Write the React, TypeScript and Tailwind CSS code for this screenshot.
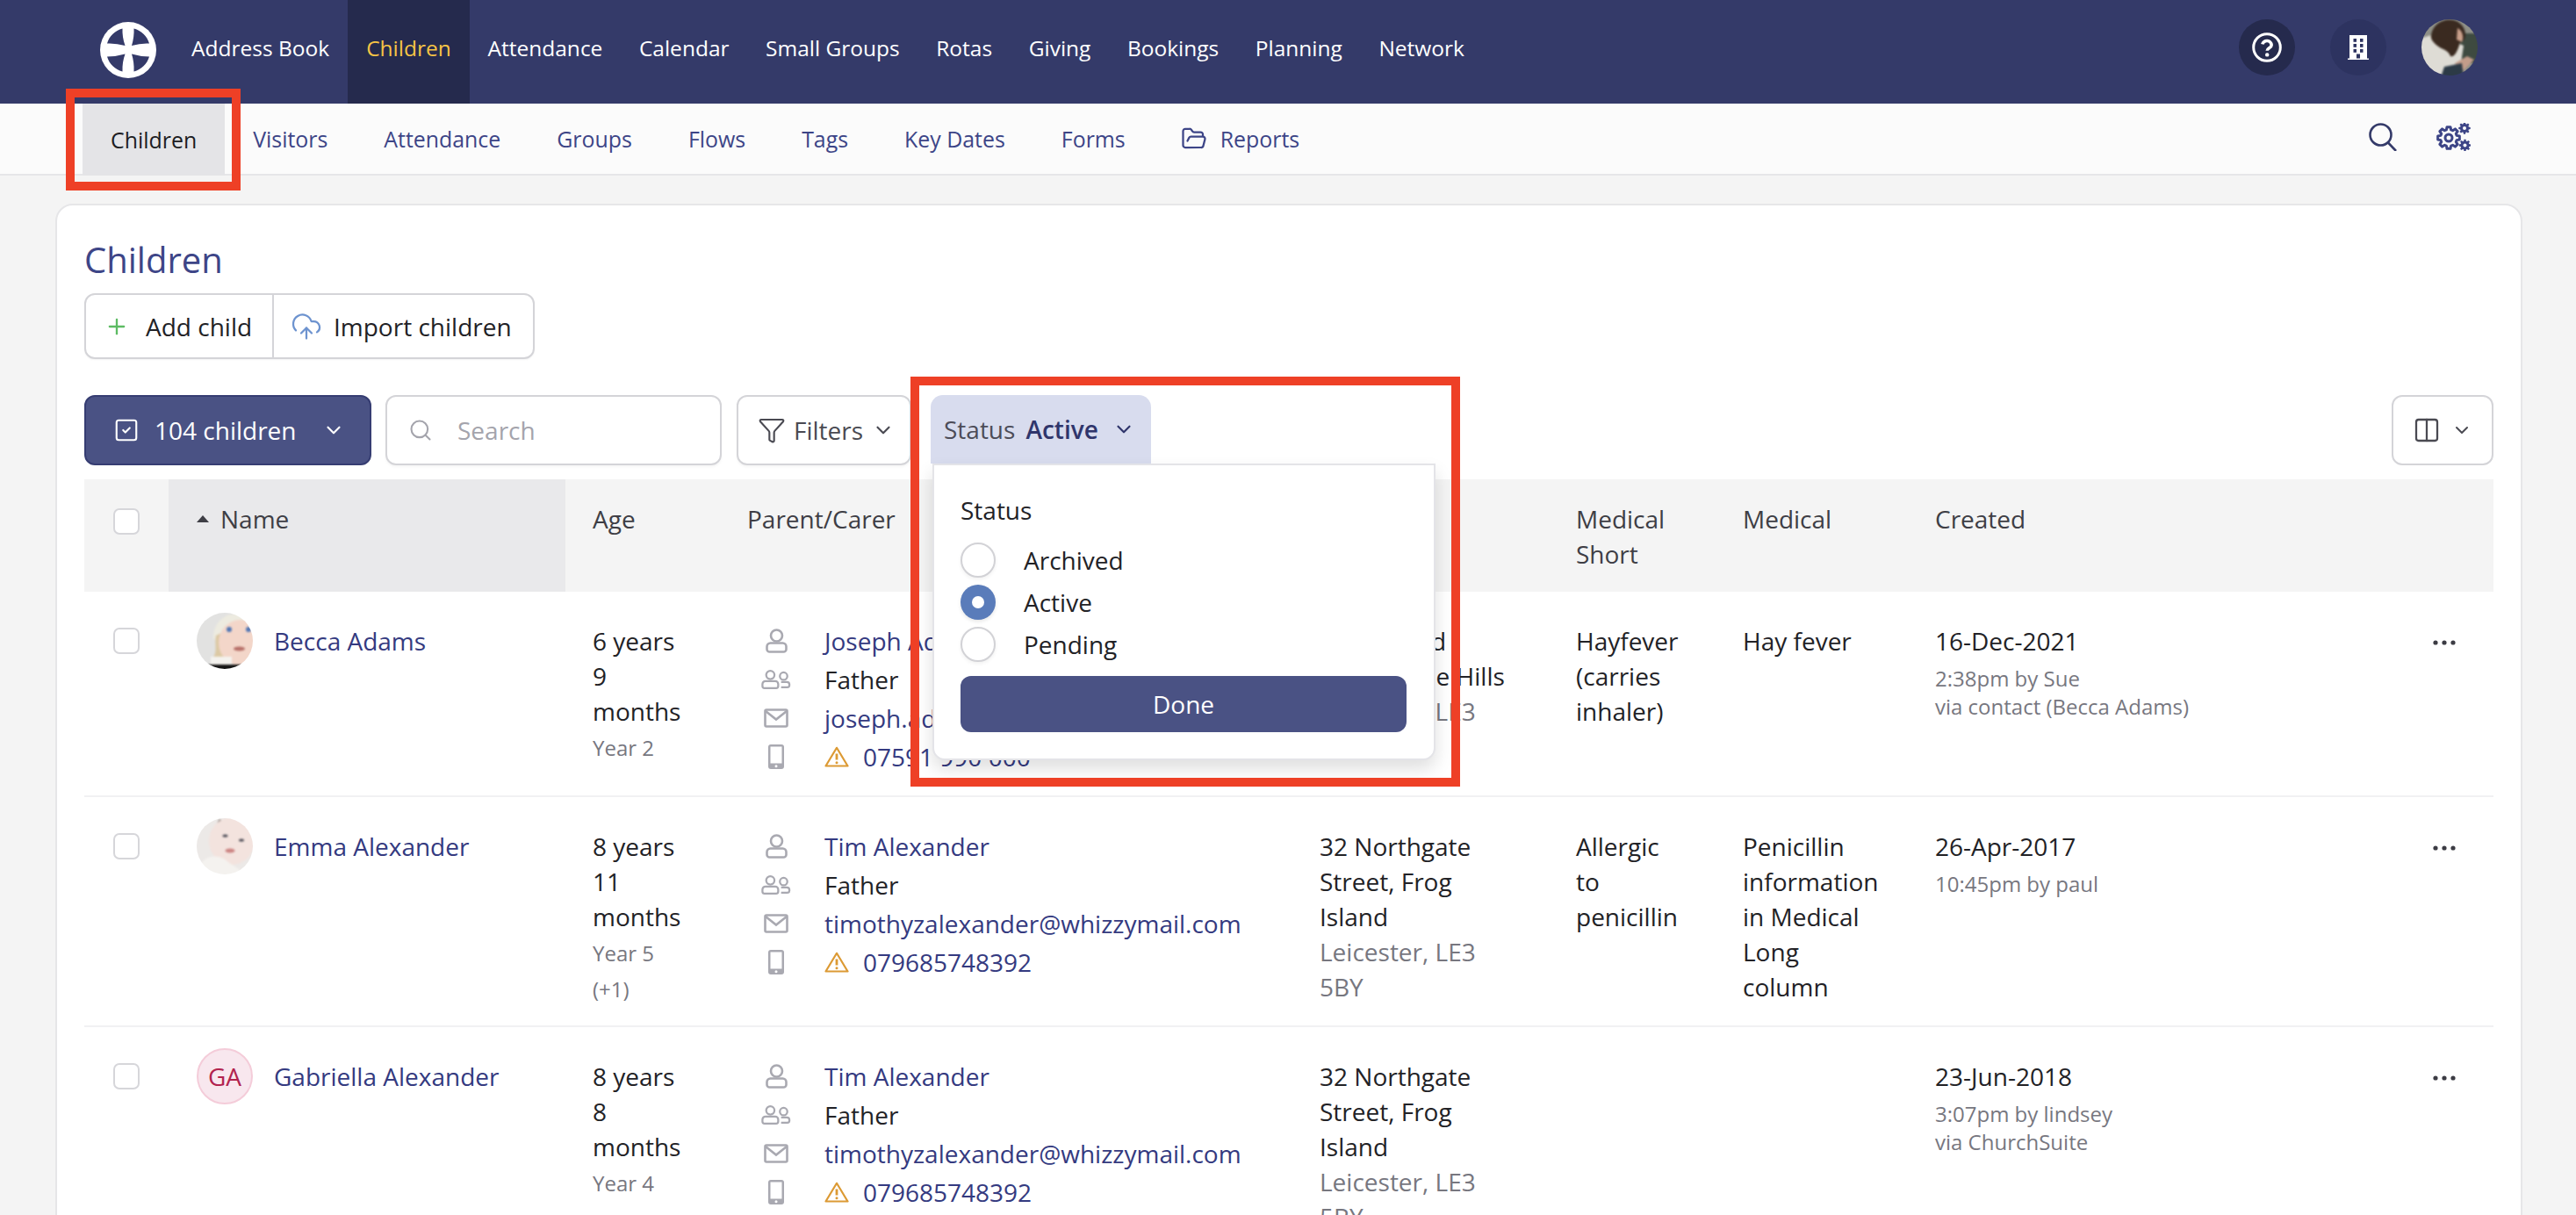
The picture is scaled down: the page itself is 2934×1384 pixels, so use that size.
import { ChevronDown, CloudUpload, Columns2, FolderOpen, Funnel, Plus, Search, SquareCheck } from "lucide-react"
import type { ReactNode } from "react"

const mainNav = ["Attendance", "Calendar", "Small Groups", "Rotas", "Giving", "Bookings", "Planning", "Network"]
const subNav = ["Visitors", "Attendance", "Groups", "Flows", "Tags", "Key Dates", "Forms"]

function gearPath(cx: number, cy: number, ro: number, ri: number, teeth: number) {
  const pts: string[] = []
  const step = (Math.PI * 2) / teeth
  for (let i = 0; i < teeth; i++) {
    const a = i * step - Math.PI / 2
    const list: [number, number][] = [
      [ri, a - step * 0.36],
      [ro, a - step * 0.2],
      [ro, a + step * 0.2],
      [ri, a + step * 0.36],
    ]
    list.forEach(([r, t]) => pts.push(`${(cx + r * Math.cos(t)).toFixed(2)} ${(cy + r * Math.sin(t)).toFixed(2)}`))
  }
  return "M" + pts.join("L") + "Z"
}

function Logo() {
  return (
    <svg viewBox="0 0 64 64" className="w-[64px] h-[64px] shrink-0">
      <circle cx="32" cy="32" r="32" fill="#ffffff" />
      <g fill="#343a69">
        <path d="M25.5 7.5C17 10 10.5 16 8 24.5Q18 24 28.5 27Q25 17 25.5 7.5Z" />
        <path d="M38.5 7.5C47 10 53.5 16 56 24.5Q46 24 36 27Q39 17 38.5 7.5Z" />
        <path d="M8 39.5C10.5 48 17 54 25.5 56.5Q25 46 28.5 36.5Q18 39.5 8 39.5Z" />
        <path d="M56 39.5C53.5 48 47 54 38.5 56.5Q39 46 36 36.5Q46 39.5 56 39.5Z" />
      </g>
    </svg>
  )
}

function HelpIcon() {
  return (
    <svg viewBox="0 0 34 34" className="w-[34px] h-[34px]" fill="none" stroke="#fff" strokeWidth="3">
      <circle cx="17" cy="17" r="15.3" />
      <path d="M11.8 13.4a5.3 5.3 0 0 1 10.4 .9c0 3.4-5 3.6-5 6.4" strokeWidth="3.6" />
      <circle cx="17.2" cy="25.4" r="2.2" fill="#fff" stroke="none" />
    </svg>
  )
}

function BuildingIcon() {
  return (
    <svg viewBox="0 0 24 28" className="w-[24px] h-[28px]">
      <path fill="#fff" d="M2 0h20v26.5h2V28H0v-1.500h2Z" />
      <g fill="#2d3360">
        <rect x="6.500" y="4" width="3.500" height="3.800" />
        <rect x="14" y="4" width="3.500" height="3.800" />
        <rect x="6.500" y="10" width="3.500" height="3.800" />
        <rect x="14" y="10" width="3.500" height="3.800" />
        <rect x="6.500" y="16" width="3.500" height="3.800" />
        <rect x="14" y="16" width="3.500" height="3.800" />
        <rect x="10" y="21.500" width="4" height="5" />
      </g>
    </svg>
  )
}

function WomanAvatar() {
  return (
    <svg viewBox="8 8 64 64" className="w-[64px] h-[64px] rounded-full shrink-0">
      <g className="blur-[0.8px]">
        <rect x="6" y="6" width="68" height="68" fill="#8f9087" />
        <rect x="52" y="24" width="22" height="34" fill="#3e4a40" />
        <path d="M6 30L26 24L56 38L52 64L28 74H6Z" fill="#dedcd5" />
        <path d="M46 58L60 50L68 54L54 68Z" fill="#c39c8a" />
        <path d="M30 74L34 62L54 58L56 74Z" fill="#2c3a46" />
        <path d="M19 26C22 6 50 2 57 20C60 28 56 34 52 34C50 42 46 52 41 50C38 42 30 42 26 38C22 35 18 31 19 26Z" fill="#3a2a20" />
        <path d="M49 18C54 20 57 28 54 34L48 31Z" fill="#c99f8a" />
      </g>
    </svg>
  )
}

function BeccaAvatar() {
  return (
    <svg viewBox="8 8 64 64" className="w-[64px] h-[64px] rounded-full shrink-0">
      <g className="blur-[0.8px]">
        <rect x="6" y="6" width="68" height="68" fill="#e2e2e1" />
        <path d="M27 38C26 20 40 6 60 10L74 20L44 26L34 40Z" fill="#edebe0" />
        <path d="M30 34C28 46 33 54 24 62L38 64L42 28Z" fill="#dcc9a4" />
        <ellipse cx="58" cy="42" rx="25" ry="26" fill="#f3d6c9" />
        <rect x="24" y="58" width="24" height="10" fill="#f4f2ee" />
        <rect x="18" y="67" width="50" height="8" fill="#141414" />
        <circle cx="45" cy="27" r="3" fill="#5277b5" />
        <circle cx="67" cy="27" r="3" fill="#5277b5" />
        <ellipse cx="56.500" cy="49" rx="6.500" ry="2.600" fill="#b87068" />
      </g>
    </svg>
  )
}

function EmmaAvatar() {
  return (
    <svg viewBox="8 8 64 64" className="w-[64px] h-[64px] rounded-full shrink-0">
      <g className="blur-[0.8px]">
        <rect x="6" y="6" width="68" height="68" fill="#ece9e7" />
        <path d="M34 9C30 14 31 20 29 25L37 11Z" fill="#8c7f78" />
        <ellipse cx="48" cy="34" rx="26" ry="27" fill="#f3e3de" />
        <path d="M12 60C22 48 36 50 44 58C52 64 58 66 64 74H12Z" fill="#f4f2ef" />
        <ellipse cx="40.500" cy="28" rx="3" ry="1.600" fill="#4a4a54" />
        <ellipse cx="59" cy="33" rx="3" ry="1.600" fill="#4a4a54" />
        <ellipse cx="46" cy="45" rx="5.500" ry="2.400" fill="#cc8482" />
      </g>
    </svg>
  )
}

function GaAvatar() {
  return (
    <div className="w-[64px] h-[64px] rounded-full shrink-0 flex items-center justify-center bg-[#f8e7ee] border-2 border-[#f4ccd9] text-[#b2234e] text-[28px]">
      GA
    </div>
  )
}

function PersonIcon() {
  return (
    <svg viewBox="0 0 25 28" className="w-[25px] h-[28px]" fill="none" stroke="#a9a9b1" strokeWidth="2.600">
      <circle cx="12.500" cy="8" r="6.500" />
      <path d="M5.500 16.500h14a4 4 0 0 1 4 4v3a3 3 0 0 1-3 3h-16a3 3 0 0 1-3-3v-3a4 4 0 0 1 4-4Z" />
    </svg>
  )
}

function PeopleIcon() {
  return (
    <svg viewBox="0 0 36 24" className="w-[36px] h-[24px]" fill="none" stroke="#a9a9b1" strokeWidth="2.400">
      <circle cx="11" cy="6.500" r="5" />
      <path d="M5 14h12a3.500 3.500 0 0 1 3.500 3.500v2.500a2.500 2.500 0 0 1-2.500 2.500H4a2.500 2.500 0 0 1-2.500-2.500v-2.500A3.500 3.500 0 0 1 5 14Z" />
      <circle cx="27" cy="8" r="4.500" />
      <path d="M24 15h7a3 3 0 0 1 3 3v1a2.500 2.500 0 0 1-2.500 2.500H24" />
    </svg>
  )
}

function MailIcon() {
  return (
    <svg viewBox="0 0 28 22" className="w-[28px] h-[22px]" fill="none" stroke="#a9a9b1" strokeWidth="2.600">
      <rect x="1.500" y="1.500" width="25" height="19" rx="1.500" />
      <path d="M2 3l12 9.500L26 3" />
    </svg>
  )
}

function PhoneIcon() {
  return (
    <svg viewBox="0 0 18 28" className="w-[18px] h-[28px]">
      <rect x="0" y="0" width="18" height="28" rx="3" fill="#a9a9b1" />
      <rect x="2.500" y="2.500" width="13" height="19" fill="#fff" />
      <circle cx="9" cy="24.800" r="1.500" fill="#fff" />
    </svg>
  )
}

function WarnIcon() {
  return (
    <svg viewBox="0 0 28 24" className="w-[28px] h-[24px] shrink-0" fill="none" stroke="#dc9a34" strokeWidth="2.200" strokeLinejoin="round">
      <path d="M14 1.800L26.500 22.500H1.500Z" />
      <path d="M14 8.500v7" strokeWidth="2.800" />
      <circle cx="14" cy="18.800" r="1.500" fill="#dc9a34" stroke="none" />
    </svg>
  )
}

function Dots() {
  return (
    <svg viewBox="0 0 26 6" className="w-[26px] h-[6px]" fill="#3c3c44">
      <circle cx="3" cy="3" r="2.600" />
      <circle cx="13" cy="3" r="2.600" />
      <circle cx="23" cy="3" r="2.600" />
    </svg>
  )
}

function Check() {
  return <div className="w-[30px] h-[30px] rounded-[7px] border-2 border-[#d6d6da] bg-white" />
}

function Radio({ label, on }: { label: string; on?: boolean }) {
  return (
    <div className="flex items-center h-[48px]">
      {on ? (
        <div className="w-[40px] h-[40px] rounded-full bg-[#5a7cba] flex items-center justify-center shadow-[0_2px_4px_rgba(0,0,0,0.1)]">
          <div className="w-[14px] h-[14px] rounded-full bg-white" />
        </div>
      ) : (
        <div className="w-[40px] h-[40px] rounded-full border-2 border-[#d2d2d6] bg-white shadow-[0_2px_4px_rgba(0,0,0,0.06)]" />
      )}
      <span className="ml-[32px]">{label}</span>
    </div>
  )
}

type Child = {
  name: string
  avatar: ReactNode
  age: string
  school: string
  parent: string
  email: string
  phone: string
  street: string
  town: string
  short?: string
  medical?: string
  date: string
  created: string[]
}

const children: Child[] = [
  {
    name: "Becca Adams",
    avatar: <BeccaAvatar />,
    age: "6 years 9 months",
    school: "Year 2",
    parent: "Joseph Adams",
    email: "joseph.adams@whizzymail.com",
    phone: "07591 990 000",
    street: "16 Fairfield\nClose, Rose Hills",
    town: "Leicester, LE3",
    short: "Hayfever (carries inhaler)",
    medical: "Hay fever",
    date: "16-Dec-2021",
    created: ["2:38pm by Sue", "via contact (Becca Adams)"],
  },
  {
    name: "Emma Alexander",
    avatar: <EmmaAvatar />,
    age: "8 years 11 months",
    school: "Year 5 (+1)",
    parent: "Tim Alexander",
    email: "timothyzalexander@whizzymail.com",
    phone: "079685748392",
    street: "32 Northgate Street, Frog Island",
    town: "Leicester, LE3 5BY",
    short: "Allergic to penicillin",
    medical: "Penicillin information in Medical Long column",
    date: "26-Apr-2017",
    created: ["10:45pm by paul"],
  },
  {
    name: "Gabriella Alexander",
    avatar: <GaAvatar />,
    age: "8 years 8 months",
    school: "Year 4",
    parent: "Tim Alexander",
    email: "timothyzalexander@whizzymail.com",
    phone: "079685748392",
    street: "32 Northgate Street, Frog Island",
    town: "Leicester, LE3 5BY",
    date: "23-Jun-2018",
    created: ["3:07pm by lindsey", "via ChurchSuite"],
  },
]

export default function App() {
  return (
    <div className="relative h-[1384px] overflow-hidden bg-[#f4f4f4] font-['Open_Sans',sans-serif] text-[28px] leading-[40px] text-[#222226]">
      <header className="h-[118px] bg-[#343a69] flex text-white text-[24.5px] font-medium">
        <div className="ml-[114px] mr-[19px] h-[114px] flex items-center">
          <Logo />
        </div>
        <a className="px-[21px] pb-[8px] flex items-center h-full">Address Book</a>
        <a className="px-[21px] pb-[8px] flex items-center h-full bg-[#252a4d] text-[#f6c445]">Children</a>
        {mainNav.map((item) => (
          <a key={item} className="px-[20.75px] pb-[8px] flex items-center h-full">
            {item}
          </a>
        ))}
        <div className="ml-auto mr-[112px] flex gap-[40px] pt-[22px]">
          <div className="w-[64px] h-[64px] rounded-full bg-[#252a4d] flex items-center justify-center">
            <HelpIcon />
          </div>
          <div className="w-[64px] h-[64px] rounded-full bg-[#2d3360] flex items-center justify-center">
            <BuildingIcon />
          </div>
          <WomanAvatar />
        </div>
      </header>

      <nav className="h-[82px] bg-[#fbfbfb] border-b-2 border-[#e6e6e8] flex pl-[94px] text-[24.9px] font-medium text-[#3d4587]">
        <a className="px-[32px] h-[82px] flex items-center bg-[#e4e4e7] text-[#1c1c22]">Children</a>
        {subNav.map((item) => (
          <a key={item} className="px-[32px] h-[80px] flex items-center">
            {item}
          </a>
        ))}
        <a className="pl-[31px] h-[80px] flex items-center">
          <FolderOpen className="w-[30px] h-[30px] mr-[15px]" strokeWidth={1.8} />
          Reports
        </a>
        <div className="ml-auto mr-[120px] flex items-center gap-[44px] pb-[4px]">
          <svg viewBox="0 0 32 32" className="w-[32px] h-[32px]" fill="none" stroke="#343a69" strokeWidth="2.600">
            <circle cx="13.500" cy="13.500" r="12" />
            <path d="M22 22.500L31 32" />
          </svg>
          <svg viewBox="0 0 40 32" className="w-[40px] h-[32px]">
            <path d={gearPath(15, 17, 12.5, 9.5, 8)} fill="none" stroke="#3d4587" strokeWidth="3" strokeLinejoin="round" />
            <circle cx="15" cy="17" r="4" fill="none" stroke="#3d4587" strokeWidth="3" />
            <path d={gearPath(33, 6, 6.8, 5, 8)} fill="#3d4587" />
            <circle cx="33" cy="6" r="2" fill="#fbfbfb" />
            <path d={gearPath(33.5, 25.5, 6.8, 5, 8)} fill="#3d4587" />
            <circle cx="33.500" cy="25.500" r="2" fill="#fbfbfb" />
          </svg>
        </div>
      </nav>

      <main className="mt-[32px] ml-[63px] mr-[61px] h-[1200px] bg-white border-2 border-[#e6e6e8] rounded-t-[20px] px-[31px] pt-[38px]">
        <h1 className="text-[40px] leading-[48px] font-medium text-[#3d4587]">Children</h1>

        <div className="mt-[14px] inline-flex h-[75px] rounded-[12px] border-2 border-[#d4d4d8] bg-white shadow-[0_1px_2px_rgba(0,0,0,0.05)]">
          <div className="w-[214px] pl-[21px] flex items-center border-r-2 border-[#d4d4d8]">
            <Plus className="w-[28px] h-[28px] text-[#5dbb63] mr-[19px]" strokeWidth={2} />
            Add child
          </div>
          <div className="pl-[19px] pr-[24px] flex items-center">
            <CloudUpload className="w-[36px] h-[36px] text-[#6d93cf] mr-[13px]" strokeWidth={1.5} />
            Import children
          </div>
        </div>

        <div className="mt-[41px] flex items-start h-[80px]">
          <div className="w-[327px] h-[80px] rounded-[12px] bg-[#4a5284] border-2 border-[#363d72] text-white flex items-center pl-[31px]">
            <SquareCheck className="w-[30px] h-[30px] mr-[17px]" strokeWidth={1.7} />
            104 children
            <ChevronDown className="w-[26px] h-[26px] ml-[29px]" strokeWidth={2} />
          </div>
          <div className="ml-[16px] w-[383px] h-[80px] rounded-[12px] border-2 border-[#d4d4d8] bg-white flex items-center pl-[24px] text-[#a4a4ac] shadow-[0_2px_3px_rgba(0,0,0,0.04)]">
            <Search className="w-[28px] h-[28px] mr-[28px]" strokeWidth={1.8} />
            Search
          </div>
          <div className="ml-[17px] w-[199px] h-[80px] rounded-[12px] border-2 border-[#d4d4d8] bg-white flex items-center pl-[22px] text-[#4a4a52] shadow-[0_2px_3px_rgba(0,0,0,0.04)]">
            <Funnel className="w-[32px] h-[32px] mr-[9px]" strokeWidth={1.6} />
            Filters
            <ChevronDown className="w-[26px] h-[26px] ml-[10px]" strokeWidth={2} />
          </div>
          <div className="relative ml-[22px] z-10">
            <div className="w-[251px] h-[78px] rounded-t-[14px] bg-[#d8dcee] flex items-center pl-[15px] text-[#4c4c58]">
              Status
              <span className="ml-[12px] font-semibold text-[#2f356b]">Active</span>
              <ChevronDown className="w-[26px] h-[26px] ml-[16px] text-[#2f356b]" strokeWidth={2} />
            </div>
            <div className="absolute top-[78px] left-[2px] w-[573px] h-[338px] bg-white border-2 border-[#e4e4e8] rounded-b-[14px] shadow-[0_10px_20px_rgba(0,0,0,0.13)] pt-[31px] px-[30px]">
              <div className="h-[40px]">Status</div>
              <div className="mt-[13px]">
                <Radio label="Archived" />
                <Radio label="Active" on />
                <Radio label="Pending" />
              </div>
              <div className="mt-[12px] h-[64px] w-[508px] rounded-[12px] bg-[#4a5284] text-white flex items-center justify-center">
                Done
              </div>
            </div>
          </div>
          <div className="ml-auto w-[116px] h-[80px] rounded-[12px] border-2 border-[#d4d4d8] bg-white flex items-center pl-[22px] text-[#4a4a52]">
            <Columns2 className="w-[32px] h-[32px]" strokeWidth={1.7} />
            <ChevronDown className="w-[24px] h-[24px] ml-[12px]" strokeWidth={2} />
          </div>
        </div>

        <table className="mt-[16px] w-full table-fixed border-collapse">
          <colgroup>
            <col className="w-[96px]" />
            <col className="w-[452px]" />
            <col className="w-[177px]" />
            <col className="w-[651px]" />
            <col className="w-[292px]" />
            <col className="w-[191px]" />
            <col className="w-[218px]" />
            <col className="w-[567px]" />
            <col className="w-[100px]" />
          </colgroup>
          <thead>
            <tr className="h-[128px] bg-[#f4f4f4] text-[#3e3e45] text-left align-top">
              <th className="font-normal pt-[33px] pl-[33px]">
                <Check />
              </th>
              <th className="font-normal bg-[#e9e9eb] pt-[25px] pl-[32px]">
                <span className="flex items-center">
                  <span className="w-0 h-0 border-x-[7px] border-x-transparent border-b-[8px] border-b-[#3e3e45] mr-[13px]" />
                  Name
                </span>
              </th>
              <th className="font-normal pt-[25px] pl-[31px]">Age</th>
              <th className="font-normal pt-[25px] pl-[30px]">Parent/Carer</th>
              <th className="font-normal pt-[25px] pl-[31px]">Address</th>
              <th className="font-normal pt-[25px] pl-[31px] pr-[40px]">Medical Short</th>
              <th className="font-normal pt-[25px] pl-[30px]">Medical</th>
              <th className="font-normal pt-[25px] pl-[31px]">Created</th>
              <th />
            </tr>
          </thead>
          <tbody>
            {children.map((c) => (
              <tr key={c.name} className="align-top border-b-2 border-[#f1f1f3]">
                <td className="pt-[41px] pl-[33px]">
                  <Check />
                </td>
                <td className="pt-[24px] pl-[32px]">
                  <div className="flex">
                    {c.avatar}
                    <a className="ml-[24px] pt-[12px] text-[#343a80]">{c.name}</a>
                  </div>
                </td>
                <td className="pt-[36px] pl-[31px] pr-[40px]">
                  {c.age}
                  <div className="mt-[1px] text-[24px] leading-[41px] text-[#77777f]">{c.school}</div>
                </td>
                <td className="pt-[34px] pb-[26px] pl-[46px]">
                  <div className="h-[172px] leading-[44px]">
                    <div className="flex items-center h-[44px]">
                      <div className="w-[34px] flex justify-center"><PersonIcon /></div>
                      <a className="ml-[38px] text-[#343a80]">{c.parent}</a>
                    </div>
                    <div className="flex items-center h-[44px]">
                      <div className="w-[34px] flex justify-center"><PeopleIcon /></div>
                      <span className="ml-[38px]">Father</span>
                    </div>
                    <div className="flex items-center h-[44px]">
                      <div className="w-[34px] flex justify-center"><MailIcon /></div>
                      <a className="ml-[38px] text-[#343a80]">{c.email}</a>
                    </div>
                    <div className="flex items-center h-[44px]">
                      <div className="w-[34px] flex justify-center"><PhoneIcon /></div>
                      <span className="ml-[38px] mr-[16px]"><WarnIcon /></span>
                      <a className="text-[#343a80]">{c.phone}</a>
                    </div>
                  </div>
                </td>
                <td className="pt-[36px] pb-[24px] pl-[31px] pr-[31px] whitespace-pre-line">
                  {c.street}
                  <div className="text-[#77777f]">{c.town}</div>
                </td>
                <td className="pt-[36px] pl-[31px] pr-[40px]">{c.short}</td>
                <td className="pt-[36px] pl-[30px] pr-[28px]">{c.medical}</td>
                <td className="pt-[36px] pl-[31px]">
                  {c.date}
                  <div className="mt-[7px] text-[24px] leading-[32px] text-[#77777f]">
                    {c.created.map((line) => (
                      <div key={line}>{line}</div>
                    ))}
                  </div>
                </td>
                <td className="pt-[55px] pl-[31px]">
                  <Dots />
                </td>
              </tr>
            ))}
          </tbody>
        </table>
      </main>

      <div className="absolute left-[75px] top-[101px] w-[199px] h-[116px] border-[10px] border-[#ee4026] pointer-events-none" />
      <div className="absolute left-[1037px] top-[429px] w-[626px] h-[467px] border-[10px] border-[#ee4026] z-20 pointer-events-none" />
    </div>
  )
}
